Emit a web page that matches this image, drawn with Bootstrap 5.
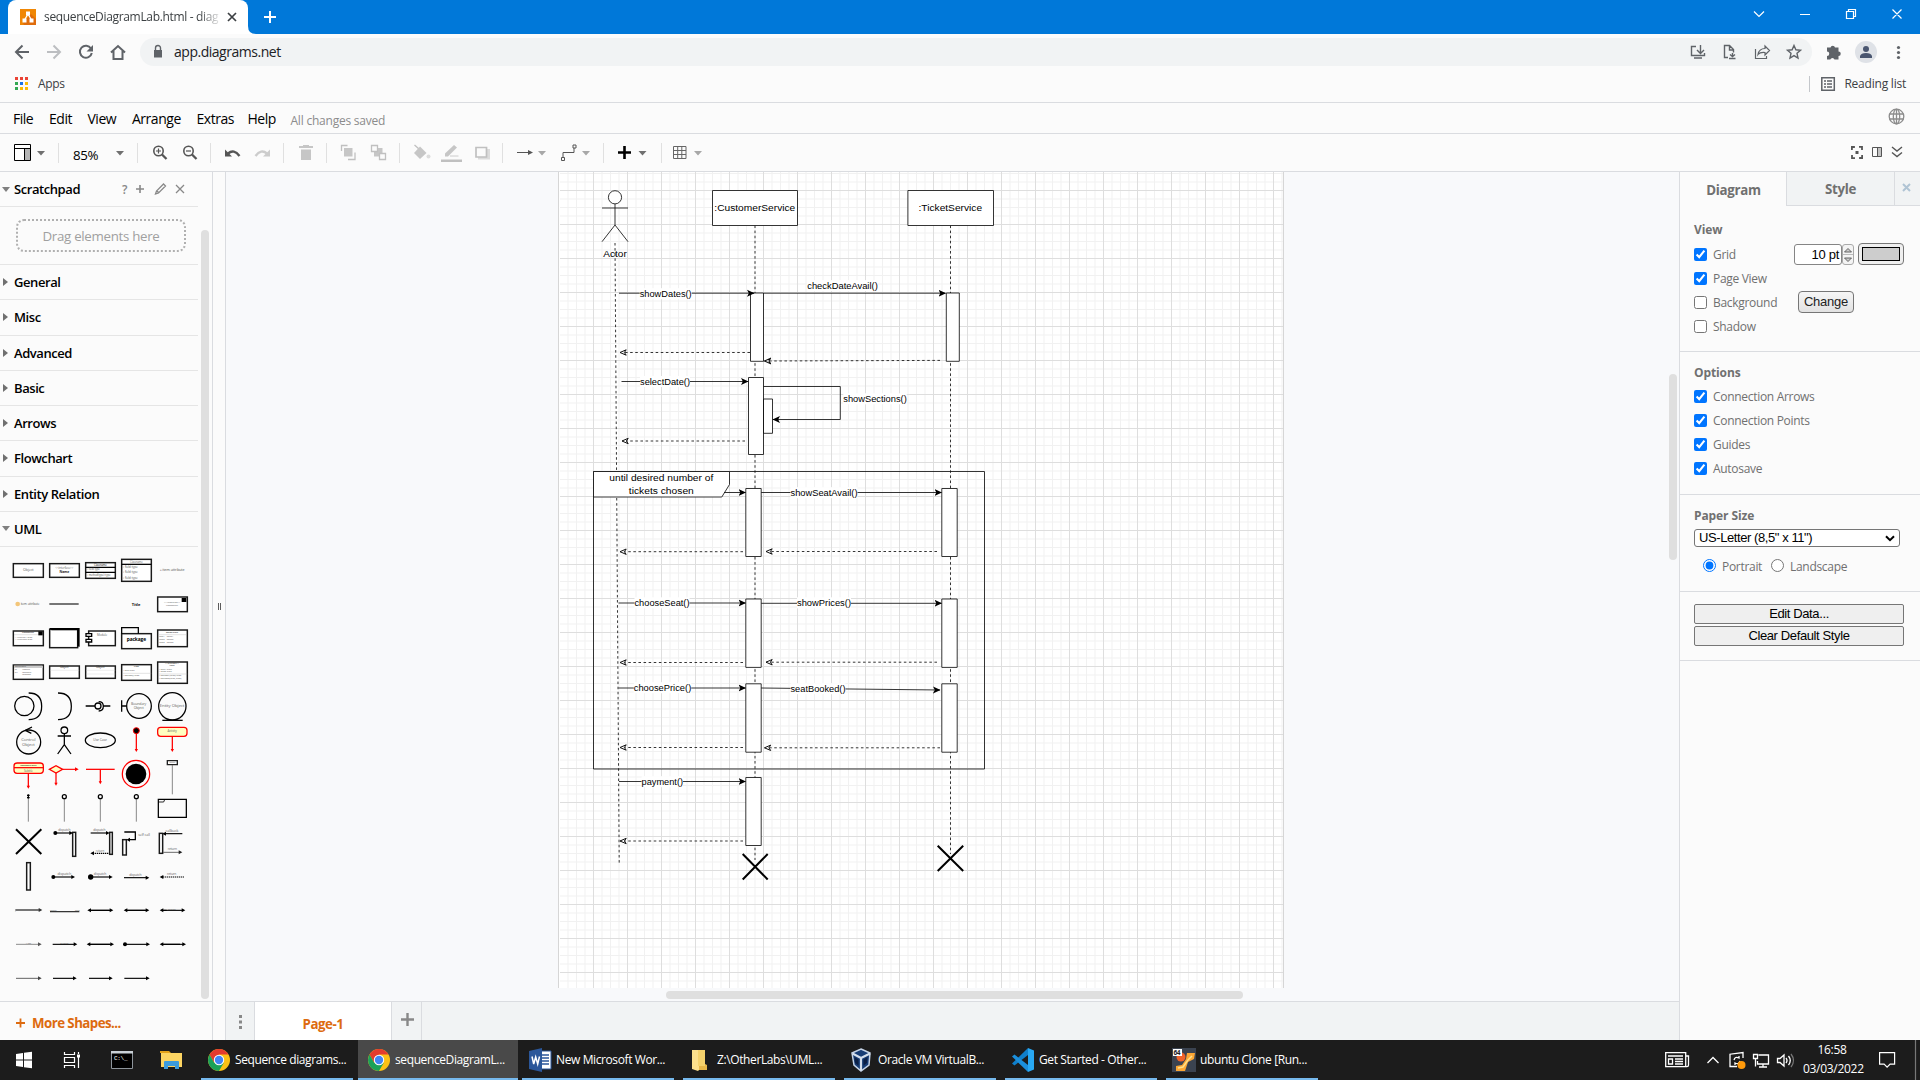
<!DOCTYPE html>
<html lang="en">
<head>
<meta charset="utf-8">
<title>sequenceDiagramLab.html - diagrams.net</title>
<link href="https://cdn.jsdelivr.net/npm/bootstrap@5.3.0/dist/css/bootstrap.min.css" rel="stylesheet">
<script src="https://cdn.jsdelivr.net/npm/bootstrap@5.3.0/dist/js/bootstrap.bundle.min.js"></script>
<style>
:root{--line:#dadce0;--ui:"Open Sans","Noto Sans",sans-serif}
html,body{height:1080px;overflow:hidden}
body{width:1920px;font:12px/16px var(--ui);letter-spacing:-.3px;color:#000;background:#fbfbfb}
svg{display:block;flex:none}
.tabstrip{height:34px;background:#0078d9}
.btab{width:240px;margin-left:8px;padding-left:12px;background:#fff;border-radius:8px 8px 0 0}
.btab .ttl{width:176px;margin-left:8px;color:#3c4043;white-space:nowrap;letter-spacing:-.33px;-webkit-mask-image:linear-gradient(90deg,#000 155px,transparent 178px)}
.navrow{height:36px}
.omni{width:1672px;height:28px;border-radius:14px;background:#f1f3f4;margin-top:4px}
.omni .url{font-size:14px;color:#202124;letter-spacing:-.48px}
.bookmarks{height:33px;border-bottom:1px solid var(--line)}
.bookmarks span{margin-top:-4px}
.menubar{height:31px;border-bottom:1px solid var(--line);padding-left:13px}
.menubar .mi{font-size:14px;letter-spacing:-.48px;padding-top:2px}
.toolbar{height:38px;border-bottom:1px solid var(--line)}
.main{height:868px}
.side{width:213px;border-right:1px solid var(--line)}
.side-scroll{height:829px}
.sect{height:35.25px;width:198px;border-bottom:1px solid #e5e5e5;font-weight:600;font-size:13px;letter-spacing:-.43px;white-space:nowrap}
.sect i{border:4px solid transparent;border-left:5px solid #707070;border-right:0;width:5px;height:8px;margin-left:3px;margin-right:6px}
.sect i.open{border:4px solid transparent;border-top:5px solid #808080;border-bottom:0;width:8px;height:5px;margin-left:2px;margin-right:4px}
.dropzone{width:170px;height:33px;margin:12px 0 12px 16px;border:2px dotted #b0b0b0;border-radius:8px;color:#a0a0a0;font-size:13.3px;letter-spacing:-.3px}
.palette{width:190px;padding:6px 0 0 10px}
.palette svg{width:36px;height:34px;overflow:visible}
.thumb{background:#dfdfdf;border-radius:4px}
.more{height:39px;border-top:1px solid var(--line);padding:4px 0 0 16px;color:#dd6b10;font-weight:700;font-size:13.3px;letter-spacing:-.55px}
.split{width:13px;border-right:1px solid var(--line)}
.work{width:1453px}
.canvas{height:829px;background:#f8f9fb;padding-left:332px}
.pages{height:39px;border-top:1px solid var(--line);background:#f1f3f4}
.pg{width:138px;background:#fff;border-right:1px solid var(--line);border-left:1px solid var(--line);color:#dd6b10;font-weight:700;font-size:13.3px;letter-spacing:-.45px;padding-top:5px}
.fmt{width:241px;border-left:1px solid var(--line);color:#707070;font-size:12px}
.ftab{height:34px;background:#f1f3f4;border-bottom:1px solid var(--line);border-left:1px solid var(--line);font-weight:700;font-size:13.3px;letter-spacing:-.33px}
.ftab.on{background:none;border-color:transparent}
.fsec{border-bottom:1px solid var(--line);padding:0 20px 0 14px}
.fsec b{display:block;letter-spacing:-.1px;line-height:16px}
.frow{height:24px}
.frow input,.radios input{appearance:auto;width:13px;height:13px;margin:0 6px 0 0}
.frow span{padding-top:1px}
.num{width:48px;height:21px;border:1px solid #858585;border-radius:3px;background:#fff;color:#000;text-align:right;font:13px/19px "Liberation Sans",sans-serif;padding-right:2px}
.step{width:12px;height:21px;border:1px solid #aaa;border-radius:3px;background:#f4f4f4}
.swatch{width:46px;height:22px;border:1.5px solid #777;border-radius:4px;background:#efefef;padding:2.5px 3px}
.swatch div{height:14px;border:1px solid #000;background:#cdcdcd}
.gbtn{border:1px solid #767676;border-radius:4px;background:linear-gradient(#f6f6f6,#e2e2e2);color:#222;font:13px/19px "Liberation Sans",sans-serif;letter-spacing:-.25px;width:56px;height:22px;text-align:center}
.fbtn{border:1px solid #767676;border-radius:2px;background:#efefef;color:#000;font:13px/17px "Liberation Sans",sans-serif;letter-spacing:-.38px;width:210px;height:20px;text-align:center;margin-bottom:2px}
.paper{width:206px;height:18px;border:1px solid #767676;border-radius:3px;background:#fff;color:#000;font:13px/16px "Liberation Sans",sans-serif;letter-spacing:-.42px;padding:0 4px}
.task{height:40px;background:#1c1c1c;color:#fff}
.tbtn{width:152px;height:40px;margin-right:9px;border-bottom:2px solid #76b9ed;padding:2px 0 0 6px;white-space:nowrap;letter-spacing:-.39px}
.tbtn svg{margin-right:4px}
.tbtn.on{width:160px;margin:0 4px 0 -4px;padding-left:9px;background:#494949}
.dia text{font-family:"Liberation Sans",Arial,sans-serif;text-anchor:middle;letter-spacing:0}
</style>
</head>
<body>
<header class="tabstrip d-flex">
  <div class="btab d-flex align-items-center">
    <svg width="16" height="16" viewBox="0 0 16 16"><path fill="#f08705" d="M0 0h16v16H0z"/><path fill="#df6c0c" d="M11 5l5 5v6H4l-1-2z"/><path d="M8 5L4.500 11M8 5l3.500 6" stroke="#fff" stroke-width="1.300"/><path fill="#fff" d="M6 2.500h4v4H6zM2.500 9.500h4v4h-4zM9.500 9.500h4v4h-4z"/></svg>
    <div class="ttl">sequenceDiagramLab.html - diag</div>
    <svg width="10" height="10" viewBox="0 0 10 10" style="margin-left:7px"><path d="M1 1l8 8M9 1L1 9" stroke="#3c4043" stroke-width="1.700"/></svg>
  </div>
  <svg width="1672" height="34" viewBox="248 0 1672 34" fill="none" stroke="#fff"><path d="M248 26v8h8q-8 0-8-8z" fill="#fff" stroke="none"/><path d="M264 17h12M270 11v12" stroke-width="2"/><path d="M1754 11.500l5 5 5-5" stroke-width="1.200"/><path d="M1800 14.500h10M1846.500 11.500h7v7h-7zM1848.500 11.500v-2h7v7h-2M1892.500 9.500l9 9M1901.500 9.500l-9 9" stroke-width="1.200"/></svg>
</header>
<div class="navrow d-flex">
  <svg width="140" height="36" viewBox="0 34 140 36" fill="none" stroke="#5f6368" stroke-width="2"><path d="M29 52H16M22.500 45.500L16 52l6.500 6.500"/><path d="M47 52h13M53.500 45.500L60 52l-6.500 6.500" stroke="#bcbec1"/><path d="M91 48.500A6 6 0 1 0 91.800 53"/><path d="M93 45v6.500h-6.500z" fill="#5f6368" stroke="none"/><path d="M111 52.500l7-6.500 7 6.500M113.500 51v8h9v-8"/></svg>
  <div class="omni d-flex align-items-center justify-content-between">
    <div class="d-flex align-items-center">
      <svg width="34" height="28" viewBox="140 38 34 28"><path fill="#5f6368" d="M154 50h8v7.500h-8z"/><path d="M155.500 50v-2a2.500 2.500 0 0 1 5 0v2" fill="none" stroke="#5f6368" stroke-width="1.400"/></svg>
      <span class="url">app.diagrams.net</span>
    </div>
    <svg width="122" height="28" viewBox="1690 38 122 28" fill="none" stroke="#5f6368" stroke-width="1.400"><path d="M1696 46.500h-4.500v9h13V53M1694 58h8M1700.500 45v8M1697 50l3.500 3.500 3.500-3.500"/><path d="M1728 57.500h-3.500v-12h5l4 4v3M1729.500 46v4h4M1732.500 53v3.500M1730 54.500l2.500 2 2.500-2M1729 58.500h6.500"/><path d="M1755.500 49v9.500h11V56M1758 54.500q1-6 7-6v-2.500l4.500 4.500-4.500 4.500v-2.500q-5-.500-7 2z" stroke-width="1.200"/><path d="M1794 45.500l1.900 4.300 4.600.500-3.500 3 1 4.700-4-2.400-4 2.400 1-4.700-3.500-3 4.600-.500z"/></svg>
  </div>
  <svg width="108" height="36" viewBox="1812 34 108 36" fill="#5f6368"><path d="M1827 47.500h3.500a2.300 2.300 0 0 1 4.500 0h3.500v4a2.200 2.200 0 0 1 0 4.500v3.500h-4a2.200 2.200 0 0 0-4.200 0H1827v-3.500a2.200 2.200 0 0 0 0-4.500z"/><circle cx="1866" cy="52" r="11" fill="#dfe2e7"/><circle cx="1866" cy="49" r="3" fill="#4a5670"/><path d="M1860 58v-2q1-3 6-3t6 3v2z" fill="#4a5670"/><circle cx="1898.500" cy="47.500" r="1.600"/><circle cx="1898.500" cy="52.500" r="1.600"/><circle cx="1898.500" cy="57.500" r="1.600"/></svg>
</div>
<div class="bookmarks d-flex align-items-center justify-content-between" style="color:#3c4043">
  <div class="d-flex align-items-center">
    <svg width="38" height="32" viewBox="0 70 38 32"><path fill="#ea4335" d="M15 77h3v3h-3zM20 77h3v3h-3zM25 77h3v3h-3z"/><path fill="#34a853" d="M15 82h3v3h-3zM15 87h3v3h-3z"/><path fill="#1a73e8" d="M20 82h3v3h-3z"/><path fill="#fbbc04" d="M25 82h3v3h-3zM20 87h3v3h-3zM25 87h3v3h-3z"/></svg><span>Apps</span>
  </div>
  <div class="d-flex align-items-center" style="padding-right:14px">
    <svg width="35" height="32" viewBox="1809 70 35 32" fill="none" stroke="#5f6368" stroke-width="1.500"><path d="M1809.500 76v16" stroke="#c4c7cb" stroke-width="1"/><path d="M1821.800 77.800h12.500v12.500h-12.500zM1824 81h2M1824 84h2M1824 87h2M1827 81h5M1827 84h5M1827 87h5"/></svg><span style="letter-spacing:-.22px">Reading list</span>
  </div>
</div>
<div class="menubar d-flex align-items-center justify-content-between">
  <nav class="d-flex align-items-center">
    <span class="mi" style="width:36px">File</span><span class="mi" style="width:38.500px">Edit</span><span class="mi" style="width:44.500px">View</span><span class="mi" style="width:64.500px">Arrange</span><span class="mi" style="width:51px">Extras</span><span class="mi" style="width:43px">Help</span><span style="color:#8c8c8c;padding-top:5px;letter-spacing:-.22px">All changes saved</span>
  </nav>
  <svg width="32" height="30" viewBox="1888 103 32 30" fill="none" stroke="#8c8c8c" stroke-width="1.300"><circle cx="1896.500" cy="116.500" r="7.300"/><ellipse cx="1896.500" cy="116.500" rx="3.200" ry="7.300"/><path d="M1889.500 114h14M1889.500 119h14M1896.500 109v15"/></svg>
</div>
<div class="toolbar d-flex">
  <svg width="73" height="37" viewBox="0 134 73 37"><path d="M14.500 144.500h16v16h-16z" fill="#fff" stroke="#000"/><path d="M25 149h5v11h-5z" fill="#b5b5b5"/><path d="M14 148.500h17M24.500 148.500v12" stroke="#000"/><path d="M37 151h8l-4 4.500z" fill="#707070"/><path d="M58.500 143v20" stroke="#e0e0e0"/></svg>
  <span style="width:42px;font-size:13.300px;line-height:16px;padding-top:13px;letter-spacing:-.3px">85%</span>
  <svg width="1389" height="37" viewBox="115 134 1389 37" fill="none">
    <path d="M137.500 143v20M210.500 143v20M283.500 143v20M326.500 143v20M399.500 143v20M502.500 143v20M603.500 143v20M661.500 143v20" stroke="#e0e0e0"/>
    <path d="M116 151h8l-4 4.500zM638.500 151h8l-4 4.500z" fill="#707070"/><path d="M538 151h8l-4 4.500zM582 151h8l-4 4.500zM694 151h8l-4 4.500z" fill="#a8a8a8"/>
    <g stroke="#555" stroke-width="1.600"><circle cx="158.500" cy="151" r="4.700"/><path d="M162 154.500l4.500 4.500" stroke-width="2.300"/><path d="M156 151h5M158.500 148.500v5" stroke-width="1.200"/><circle cx="188.500" cy="151" r="4.700"/><path d="M192 154.500l4.500 4.500" stroke-width="2.300"/><path d="M186 151h5" stroke-width="1.200"/></g>
    <path d="M228 153.500q6-5 11.500 2.500" stroke="#555" stroke-width="2.300"/><path d="M225 149.500v7h7z" fill="#555"/>
    <path d="M267 153.500q-6-5-11.500 2.500" stroke="#ccc" stroke-width="2.300"/><path d="M270 149.500v7h-7z" fill="#ccc"/>
    <g fill="#c6c6c6"><path d="M299 146h14v2h-14zM303 145h6v1h-6zM301 149.500h10V160h-10z"/><path d="M344 148h8.500v8.500H344z"/><path d="M374 148h8.500v8.500H374z"/></g>
    <g stroke="#c0c0c0" stroke-width="1.300"><path d="M341.500 151v-5.500h6M348 159.500h7v-7"/><path d="M371.500 145.500h6v6h-6zM379.500 153.500h6v6h-6z" fill="#fbfbfb"/><path d="M414.500 145l9 8"/></g>
    <path d="M420 146.500l6.500 6.500-6.500 6-6-6z" fill="#c6c6c6"/><circle cx="428.500" cy="156.500" r="2" fill="#dcdcdc"/>
    <path d="M445 156.500v-3l9-8.500 3 2.500-9 9z" fill="#c6c6c6"/><path d="M450 156h8.500" stroke="#ccc"/><path d="M441 159.500h21v2.500h-21z" fill="#c0c0c0"/>
    <path d="M478 149h12v10.500h-12z" fill="#dcdcdc"/><path d="M476 147.500h10.500V157H476z" fill="#fbfbfb" stroke="#c0c0c0" stroke-width="1.700"/>
    <path d="M517 152.500h14" stroke="#555"/><path d="M533 152.500l-5-2.500v5z" fill="#555"/>
    <path d="M563 158v-5.500h11V147" stroke="#555"/><path d="M561.500 157.500h3v3h-3zM573 145h3v3h-3z" stroke="#555" fill="#fbfbfb"/>
    <path d="M618 152.500h13M624.500 146v13" stroke="#000" stroke-width="2.600"/>
    <path d="M673.500 146.500h12.500v12h-12.500zM677.700 146v13M681.800 146v13M673 150.500h13M673 154.500h13" stroke="#666"/>
  </svg>
  <svg class="ms-auto" width="80" height="37" viewBox="1840 134 80 37" fill="none" stroke="#555" stroke-width="1.800"><path d="M1851.900 150v-3h3M1859 146.900h3v3M1862.100 155v3h-3M1855 158.100h-3v-3"/><path d="M1855.500 150.500h3v3h-3z" fill="#555" stroke="none" transform="translate(0 .500)"/><path d="M1878 147h3.500v10h-3.500z" fill="#c4c4c4" stroke="none"/><path d="M1872.500 147.500h9v9h-9zM1877.500 147v10" stroke-width="1"/><path d="M1892 147l5 4 5-4M1892 152.500l5 4 5-4" stroke-width="1.400"/></svg>
</div>
<div class="main d-flex">
  <aside class="side">
    <div class="side-scroll d-flex">
      <div style="width:201px">
        <div class="sect d-flex align-items-center" style="height:35px"><i class="open"></i><span style="width:107px">Scratchpad</span>
          <svg width="66" height="20" viewBox="121 179 66 20" fill="none" stroke="#888" stroke-width="1.300"><text x="122" y="194" font-size="12" fill="#888" stroke="none">?</text><path d="M136 189h8M140 185v8" stroke-width="1.600"/><path d="M155.500 194l1-3 7-7 2 2-7 7zM157 191l2 2"/><path d="M176 185l8 8M184 185l-8 8"/></svg></div>
        <div class="dropzone d-flex align-items-center justify-content-center">Drag elements here</div>
        <div style="width:198px;border-top:1px solid #e5e5e5"></div>
        <div class="sect d-flex align-items-center"><i></i>General</div>
        <div class="sect d-flex align-items-center"><i></i>Misc</div>
        <div class="sect d-flex align-items-center"><i></i>Advanced</div>
        <div class="sect d-flex align-items-center"><i></i>Basic</div>
        <div class="sect d-flex align-items-center"><i></i>Arrows</div>
        <div class="sect d-flex align-items-center"><i></i>Flowchart</div>
        <div class="sect d-flex align-items-center"><i></i>Entity Relation</div>
        <div class="sect d-flex align-items-center"><i class="open"></i>UML</div>
        <div class="palette d-flex flex-wrap" id="palette"></div>
      </div>
      <div class="thumb" style="width:8px;height:769px;margin-top:58px"></div>
    </div>
    <div class="more d-flex align-items-center"><svg width="16" height="12" viewBox="0 0 16 12"><path d="M0 6h9M4.500 1.500v9" stroke="#dd6b10" stroke-width="1.800"/></svg>More Shapes...</div>
  </aside>
  <div class="split d-flex align-items-center justify-content-center"><svg width="5" height="7" viewBox="0 0 5 7"><path d="M1.500 0v7M3.500 0v7" stroke="#333" stroke-width=".8"/></svg></div>
  <main class="work">
    <div class="canvas">
      <div class="d-flex">
      <svg class="dia" width="726" height="816" viewBox="558 172 726 816" fill="none" stroke="#111" stroke-width=".85">
        <defs>
          <pattern id="grid" x="559" y="190" width="34" height="34" patternUnits="userSpaceOnUse"><path d="M9 0v34M17.500 0v34M26 0v34M0 9h34M0 17.500h34M0 26h34" stroke="#f1f1f1" stroke-width="1"/><path d="M.5 0v34M0 .5h34" stroke="#dedede" stroke-width="1"/></pattern>
          <marker id="full" markerUnits="userSpaceOnUse" markerWidth="9" markerHeight="9" refX="7" refY="4" orient="auto"><path d="M0 .5L7.500 4 0 7.500 1.800 4z" fill="#000" stroke="none"/></marker>
          <marker id="open" markerUnits="userSpaceOnUse" markerWidth="9" markerHeight="9" refX="7" refY="4" orient="auto"><path d="M.8 1.300L7 4 .8 6.700 2.600 4z" fill="#fff" stroke="#111" stroke-width="1"/></marker>
        </defs>
        <path d="M558 172h726v816H558z" fill="#fff" stroke="none"/>
        <path d="M560 172h723v816H560z" fill="url(#grid)" stroke="none"/>
        <path d="M558.500 172v816M1283.500 172v816" stroke="#d6d6d6" stroke-width="1"/>
        <g id="lifelines" stroke-dasharray="2.550 2.550"><path d="M615 243L619.200 863"/><path d="M755 225.500V860"/><path d="M950.500 225.500V854"/></g>
        <circle cx="615" cy="197.300" r="6.600" fill="#fff"/><path d="M615 204v21M602 208h26M615 225l-13 16.700M615 225l13 16.700"/>
        <g fill="#fff"><path d="M712.500 190.500h85v35h-85zM907.900 190.500h85.600v35h-85.600z"/>
          <path d="M750.500 293h13v68.300h-13zM946.300 293h13v68.300h-13zM748.500 377.500h15v77h-15zM763.500 399h9v34.300h-9z"/></g>
        <path d="M593.500 471.500h391V769h-391z"/>
        <g fill="#fff"><path d="M745.800 488.500h15.400v68h-15.400zM941.800 488.500h15.400v68h-15.400zM745.800 599h15.400v68.400h-15.400zM941.800 599h15.400v68.400h-15.400zM745.800 683.800h15.400v68.400h-15.400zM941.800 683.800h15.400v68.400h-15.400zM745.800 777.500h15.400v68h-15.400z"/>
          <path d="M593.500 471.500h136v13l-7.700 12.500H593.500z"/></g>
        <g marker-end="url(#full)"><path d="M619 293.200H754"/><path d="M763.500 293.200H945.500"/><path d="M621.500 381.500H748"/><path d="M763.500 386.500h76.800v33H773"/><path d="M724 492.500H745.500"/><path d="M761.200 492.500H941.500"/><path d="M618.500 603H745.500"/><path d="M761.200 603.300H941.500"/><path d="M618.500 688H745.500"/><path d="M761.200 688L940 690"/><path d="M619 781.500H745.500"/></g>
        <g marker-end="url(#open)" stroke-dasharray="2.550 2.550"><path d="M750 352.500H620"/><path d="M940 360.400L764.500 361"/><path d="M745 441H622"/><path d="M743 551.700H620"/><path d="M937 551.500H766"/><path d="M743 662.500H620"/><path d="M937 662.200H766"/><path d="M743 747.500H620"/><path d="M940 747.800H764.500"/><path d="M743 841H620"/></g>
        <path d="M742.700 854l25 25.500M767.700 854l-25 25.500M937.700 845.700l25.500 25.300M963.200 845.700L937.700 871" stroke="#000" stroke-width="2"/>
        <g id="labels"></g>
      </svg>
      <div class="thumb" style="width:8px;height:186px;margin:202px 0 0 385px"></div>
      </div>
      <div class="thumb" style="width:577px;height:8px;margin:3px 0 0 108px"></div>
    </div>
    <div class="pages d-flex">
      <svg width="28" height="38" viewBox="226 1002 28 38"><path d="M239 1015h3v3h-3zM239 1020.500h3v3h-3zM239 1026h3v3h-3z" fill="#888"/></svg>
      <div class="pg d-flex align-items-center justify-content-center">Page-1</div>
      <svg width="30" height="38" viewBox="392 1002 30 38"><path d="M401 1019.500h13M407.500 1013v13" stroke="#888" stroke-width="2.400"/><path d="M421.500 1002v38" stroke="#dadce0"/></svg>
    </div>
  </main>
  <aside class="fmt">
    <div class="d-flex">
      <div class="ftab on d-flex align-items-center justify-content-center" style="width:106px;padding-top:3px">Diagram</div>
      <div class="ftab d-flex align-items-center justify-content-center" style="width:108px">Style</div>
      <div class="ftab d-flex align-items-center justify-content-center" style="width:26px;padding:0 2px 3px 0"><svg width="9" height="9" viewBox="0 0 9 9"><path d="M1 1l7 7M8 1L1 8" stroke="#b0c4d4" stroke-width="2"/></svg></div>
    </div>
    <div class="fsec" style="height:146px;padding-top:16px">
      <b>View</b>
      <div class="frow d-flex align-items-center" style="margin-top:4px;margin-right:-4px"><input type="checkbox" checked><span style="width:81px;flex:none">Grid</span><div class="num flex-shrink-0">10 pt</div><div class="step flex-shrink-0"><svg width="10" height="19" viewBox="0 0 10 19"><path d="M1.500 7L5 3.500 8.500 7zM1.500 13L5 16.500 8.500 13z" fill="#ccc" stroke="#555" stroke-width=".900"/><path d="M0 9.500h10" stroke="#bbb"/></svg></div><div class="swatch flex-shrink-0" style="margin-left:4px"><div></div></div></div>
      <div class="frow d-flex align-items-center"><input type="checkbox" checked><span>Page View</span></div>
      <div class="frow d-flex align-items-center"><input type="checkbox"><span style="width:85px">Background</span><div class="gbtn">Change</div></div>
      <div class="frow d-flex align-items-center"><input type="checkbox"><span>Shadow</span></div>
    </div>
    <div class="fsec" style="height:143px;padding-top:13px">
      <b>Options</b>
      <div class="frow d-flex align-items-center" style="margin-top:3px"><input type="checkbox" checked><span>Connection Arrows</span></div>
      <div class="frow d-flex align-items-center"><input type="checkbox" checked><span>Connection Points</span></div>
      <div class="frow d-flex align-items-center"><input type="checkbox" checked><span>Guides</span></div>
      <div class="frow d-flex align-items-center"><input type="checkbox" checked><span>Autosave</span></div>
    </div>
    <div class="fsec" style="height:97px;padding-top:13px">
      <b>Paper Size</b>
      <div class="paper d-flex align-items-center justify-content-between" style="margin-top:5px"><span>US-Letter (8,5" x 11")</span><svg width="10" height="7" viewBox="0 0 10 7"><path d="M1 1.200l4 4 4-4" fill="none" stroke="#000" stroke-width="2"/></svg></div>
      <div class="radios d-flex align-items-center" style="margin:9px 0 0 9px"><input type="radio" checked><span style="width:49px;padding-top:3px">Portrait</span><input type="radio"><span style="padding-top:3px">Landscape</span></div>
    </div>
    <div class="fsec" style="height:69px;padding-top:12px"><div class="fbtn">Edit Data...</div><div class="fbtn">Clear Default Style</div></div>
  </aside>
</div>
<footer class="task d-flex">
  <svg width="201" height="40" viewBox="0 1040 201 40" fill="none" stroke="#fff">
    <path d="M16 1054l7-1v6.500h-7zM24 1052.800l8-1.100v7.800h-8zM16 1060.500h7v6.500l-7-1zM24 1060.500h8v7.800l-8-1.100z" fill="#fff" stroke="none"/>
    <path d="M64.500 1052v2.500h10V1052M64.500 1068v-2.500h10v2.500M64.500 1057.500h10v5h-10zM78.500 1052v2M78.500 1057v11" stroke-width="1.200"/><path d="M77 1054.500h3v3h-3z" fill="#fff" stroke="none"/>
    <path d="M111 1051h22v18h-22z" fill="#000" stroke="none"/><path d="M111.500 1051.500h21v17h-21z" stroke="#8d949b"/><path d="M111 1051h22v2.500h-22z" fill="#c9d0d6" stroke="none"/><text x="114" y="1060" font-size="6" fill="#fff" stroke="none" style="font-family:'Liberation Mono',monospace">C:\_</text>
    <g stroke="none"><path d="M160 1051h9l2 2h-11z" fill="#e3a21a"/><path d="M161 1053h21v14h-21z" fill="#fcd462"/><path d="M164 1069v-7q0-1 1-1h13q1 0 1 1v7h-4v-3h-7v3z" fill="#3c9bdc"/></g>
  </svg>
  <div class="tbtn d-flex align-items-center"><svg width="24" height="24" viewBox="-12 -12 24 24"><g id="chrome"><circle r="11" fill="#fbc116"/><path d="M-9.500-5.500A11 11 0 0 1 9.500-5.500H0L-4.800 2.800z" fill="#e33b2e"/><path d="M-9.500-5.500A11 11 0 0 0 0 11L4.800 2.800H-4.800z" fill="#1aa15a"/><circle r="5.200" fill="#fff"/><circle r="4.200" fill="#4285f4"/></g></svg>Sequence diagrams...</div>
  <div class="tbtn on d-flex align-items-center"><svg width="24" height="24" viewBox="-12 -12 24 24"><use href="#chrome"/></svg>sequenceDiagramL...</div>
  <div class="tbtn d-flex align-items-center"><svg width="24" height="24" viewBox="0 0 24 24"><path d="M12 3h11v18H12z" fill="#fff" stroke="#2b579a"/><path d="M14 7h7M14 10h7M14 13h7M14 16h7" stroke="#2b579a" stroke-width="1.300"/><path d="M1 3l13-3v24L1 21z" fill="#2b579a"/><path d="M4 8.500L5.700 16l2-7 2 7 1.800-7.500" fill="none" stroke="#fff" stroke-width="1.500"/></svg>New Microsoft Wor...</div>
  <div class="tbtn d-flex align-items-center"><svg width="24" height="24" viewBox="0 0 24 24"><path d="M9 2h7v14l2 1v5H9z" fill="#e8b848"/><path d="M3 2h7v20l-1 1-6-2z" fill="#fce08c"/><path d="M9 2h7v16H9z" fill="#f5d26c"/></svg>Z:\OtherLabs\UML...</div>
  <div class="tbtn d-flex align-items-center"><svg width="24" height="24" viewBox="0 0 24 24"><path d="M11 1l9 4-1 12-8 6-7-6L2 5z" fill="#173c74" stroke="#c5d3e6" stroke-width="1.500"/><path d="M2.500 5.500L11 10l9-4.500M11 10v12.500" stroke="#d4deeb" stroke-width="2.200" fill="none"/><path d="M4.500 9l4 2.500v6L5 15zM17.500 9l-4 2.500v6L17 15z" fill="#0b1f45"/></svg>Oracle VM VirtualB...</div>
  <div class="tbtn d-flex align-items-center"><svg width="24" height="24" viewBox="0 0 24 24"><path d="M17 0l6 2.500v19L17 24z" fill="#29a8f3"/><path d="M1 15.500L17 0v7L3.500 17.500z" fill="#0f7fcb"/><path d="M1 8.500L17 24v-7L3.500 6.500z" fill="#1b8fdc"/></svg>Get Started - Other...</div>
  <div class="tbtn d-flex align-items-center"><svg width="24" height="24" viewBox="0 0 24 24"><path d="M0 0h24v24H0z" fill="#3b4350"/><circle cx="9" cy="9" r="4.500" fill="#f0632a"/><path d="M4 23v-5l6-1 4-6 1-6h8l-1 6-6 3-3 9z" fill="#fba735"/><path d="M6 20l5-1 5-7 4-4" stroke="#ffe08a" stroke-width="1.500" fill="none"/><path d="M1 1h9v7H1z" fill="#fff"/><text x="1.500" y="7" font-size="6.500" font-weight="700" fill="#222">64</text></svg>ubuntu Clone [Run...</div>
  <svg style="margin-left:328px" width="148" height="40" viewBox="1655 1040 148 40" fill="none" stroke="#fff" stroke-width="1.300">
    <path d="M1665.700 1052.700h20v14h-20zM1686 1056h2.500v9q0 1.700-1.500 1.700h-3M1668 1056h15M1675 1059h8M1675 1061.500h8M1675 1064h8M1668.500 1059h4v5h-4z"/>
    <path d="M1707.500 1063l5.500-5.500 5.500 5.500"/><path d="M1743 1058v-5.500l-13 1.700v12.300h7M1734 1060q1-4 5-2v-2M1740 1061q-1 4-5 2v2"/><circle cx="1741.500" cy="1065" r="4" fill="#ff9a0a" stroke="none"/>
    <path d="M1758.500 1055h10v9h-11v-3M1763 1064v3M1759 1067h8M1753.500 1054.500h4v4h-4zM1755.500 1058.500v8"/>
    <path d="M1777.500 1058.500h2.500l4-3.500v11l-4-3.500h-2.500zM1786 1058q2 2.500 0 5M1788.500 1056q3.500 4.500 0 9"/><path d="M1791 1054q5 6.500 0 13" stroke="#777"/>
  </svg>
  <div class="text-center" style="width:58px;margin-top:1px;line-height:18.500px;white-space:nowrap"><div>16:58</div><div>03/03/2022</div></div>
  <svg width="59" height="40" viewBox="1861 1040 59 40" fill="none" stroke="#fff" stroke-width="1.200"><path d="M1879.600 1052.600h15v11.500h-4.500l-3 3-3-3h-4.500z"/><path d="M1915.500 1040v40" stroke="#777"/></svg>
</footer>
<script>
// Message and participant labels: text, centre x, middle y, width, font size, opaque background
const labels=[["Actor",615,253.9,23.5,9.7,0],[":CustomerService",754.8,207.7,81,9.7,0],[":TicketService",950.3,207.7,63.500,9.7,0],
["showDates()",665.7,293.7,52,9.35,1],["checkDateAvail()",842.5,285.7,70.500,9.35,1],["selectDate()",665,381.5,50,9.35,1],["showSections()",875,398.8,63.500,9.35,1],
["until desired number of",661.3,478.1,104,9.7,0],["tickets chosen",661.3,490.900,65,9.7,0],["showSeatAvail()",824,492.700,67,9.35,1],
["chooseSeat()",662,602.800,55,9.35,1],["showPrices()",824,602.800,54,9.35,1],["choosePrice()",662.5,687.700,57.500,9.35,1],["seatBooked()",818,688.700,55,9.35,1],["payment()",662.3,781.700,41.500,9.35,1]];
document.getElementById("labels").innerHTML=labels.map(([t,x,y,w,s,b])=>(b?`<rect x="${x-w/2}" y="${y-5.5}" width="${w}" height="11" fill="#fff" stroke="none"/>`:"")+`<text x="${x}" y="${y+s*.35}" font-size="${s}" textLength="${w}" lengthAdjust="spacingAndGlyphs" fill="#000" stroke="none">${t}</text>`).join("");

// UML palette thumbnails, three drawing units per pixel
const K='stroke="#000" stroke-width="3.8" fill="none"', R='stroke="#f00" stroke-width="3.8" fill="none"';
const box=(x,y,w,h,f="#fff")=>`<rect x="${x}" y="${y}" width="${w}" height="${h}" stroke="#1a1a1a" stroke-width="4.4" fill="${f}"/>`;
const p=(d,a=K)=>`<path d="${d}" ${a}/>`;
const t=(x,y,s,v,c="#666",o="")=>`<text x="${x}" y="${y}" font-size="${s}" text-anchor="middle" fill="${c}" ${o}>${v}</text>`;
const l=(x,y,s,v)=>`<text x="${x}" y="${y}" font-size="${s}" fill="#555">${v}</text>`;
const ar=(x1,x2,y,c="#000",w=3.4)=>p(`M${x1} ${y}H${x2-6}`,`stroke="${c}" stroke-width="${w}" fill="none"`)+`<path d="M${x2} ${y}l-11-6v12z" fill="${c}"/>`;
const al=(x1,x2,y,d="")=>p(`M${x2} ${y}H${x1+6}`,`stroke="#000" stroke-width="3.4" fill="none" ${d}`)+`<path d="M${x1} ${y}l11-6v12z"/>`;
const dn=(x,y1,y2)=>p(`M${x} ${y1}V${y2-6}`,R)+`<path d="M${x} ${y2}l-5-9h10z" fill="#f00"/>`;
const life=(x,y)=>p(`M${x} ${y}V${y+68}`,'stroke="#777" stroke-width="2.6"');
const cells=[
 [box(40,71,90,41)+t(85,93,11,"Object"),
  box(149,71,89,41)+t(193,87,9,"&lt;&lt;interface&gt;&gt;")+t(193,99,10,"Name","#222",'font-weight="700"'),
  box(257,68,89,47)+p("M257 82H346M257 97H346")+t(301,78,8,"Classname","#000")+l(260,91,8,"+ field: type")+l(260,109,8,"+ method(type): type"),
  box(365,58,89,66)+p("M365 73H454")+t(409,69,8,"Classname")+l(368,83,9,"+ field: type")+l(368,98,9,"+ field: type")+l(368,116,9,"+ field: type"),
  l(479,93,10.5,"+ item: attribute")],
 [`<circle cx="53" cy="192" r="7" fill="#f3c67a"/>`+l(62,194,9,"item: attribute"),p("M148 192H236",'stroke="#333" stroke-width="4"'),"",t(408,197,12,"Title","#111",'font-weight="700"'),
  box(473,171,89,44)+t(516,189,7,"&lt;&lt;Annotation&gt;&gt;")+t(516,199,7,"Component")+`<path d="M545 174h14v12h-14z"/>`],
 [box(40,273,90,44)+t(84,278,7,"Component","#000")+p("M42 284H128",'stroke="#aaa"')+l(44,294,7,"+ Attribute1: Type")+l(44,301,7,"+ Attribute2: Type")+`<path d="M115 274h13v12h-13z"/>`,
  box(149,268,84,55)+p("M149 266h88v54M154 269h80v50"),
  box(266,273,80,44)+t(306,288,9,"Module")+`<path d="M258 281h17v8h-17zM258 298h17v8h-17z" fill="#fff" stroke="#000" stroke-width="4"/>`,
  box(365,281,89,45)+p("M365 281V263h50v18")+t(409,303,14.5,"package","#000",'font-weight="700"'),
  box(473,270,89,50)+t(516,279,7,"Object:Type","#000")+p("M475 284H560",'stroke="#aaa"')+l(477,292,7,"field1 = value1")+l(477,300,7,"field2 = value2")+l(477,308,7,"field3 = value3")],
 [box(40,375,90,43)+`<path d="M42 377h86v7H42z" fill="#ccc"/>`+l(44,382,7,"Tablename")+l(44,391,6,"PK")+l(67,391,6,"uniqueId")+l(44,399,6,"FK1")+l(67,399,6,"foreignKey")+l(67,405,6,"fieldname"),
  box(149,378,89,37)+t(193,385,9,"Object","#333")+p("M150 391h88",'stroke="#ccc"'),box(257,378,89,37)+t(301,385,9,"Object","#333")+p("M258 391h88M258 402h88",'stroke="#ccc"'),
  box(365,374,89,47)+t(409,381,7,"Class","#222")+l(368,393,7,"+ field: Type")+l(368,408,7,"+ method(): Type")+p("M366 400h88",'stroke="#aaa"'),
  box(473,366,89,64)+t(516,373,7,"&lt;&lt;interface&gt;&gt;","#222")+t(516,379,6,"Name","#222")+l(476,389,7,"+ field1: Type")+l(476,396,7,"+ field2: Type")+p("M474 402h88",'stroke="#aaa"')+l(476,409,7,"+ method1(Type): Type")+l(476,416,7,"+ method2(Type, Type)")],
 [`<circle cx="73" cy="498" r="29" ${K}/>`+p("M86 459q39 0 39 40t-39 40"),p("M174 459q40 0 40 40t-40 40"),p("M257 498h28M309 498h22M296 485q14 0 14 14t-14 14")+`<circle cx="294" cy="498" r="9" ${K}/>`,
  `<circle cx="417" cy="498" r="37" ${K}/>`+p("M365 481v34M365 498h15")+t(416,494,10.5,"Boundary")+t(416,507,10.5,"Object"),
  `<circle cx="517" cy="499" r="41" ${K}/>`+p("M487 541h61")+t(516,502,13,"Entity Object")],
 [`<circle cx="86" cy="606" r="36" ${K}/>`+p("M76 571l20-10M76 571l18 9")+t(85,603,13,"Control")+t(85,617,13,"Object"),
  `<circle cx="193" cy="571" r="10" ${K}/>`+p("M193 581v33M173 588h40M193 614l-20 28M193 614l20 28"),
  `<ellipse cx="301" cy="601" rx="45" ry="22" ${K}/>`+t(300,604,10,"Use Case"),
  dn(409,580,636)+`<circle cx="409" cy="572" r="9" stroke="#f00" stroke-width="3"/>`,
  `<rect x="473" y="562" width="88" height="27" rx="9" ${R} style="fill:#ffffc0"/>`+t(516,577,9,"Activity")+dn(517,589,636)],
 [`<rect x="42" y="669" width="88" height="31" rx="9" ${R} style="fill:#ffffc0"/>`+p("M42 683h88",R)+t(85,679,7,"Composite State","#000")+t(85,695,8,"Subtitle")+dn(85,700,746),
  `<path d="M148 688l20-11 20 11-20 11z" ${R} style="fill:#ffffc0"/>`+ar(188,236,688,"#f00")+dn(168,699,737),
  p("M258 688h86",R)+dn(301,688,733),`<circle cx="408" cy="702" r="41" ${R}/><circle cx="408" cy="702" r="31"/>`,
  `<path d="M502 662h30v12h-30z" fill="#fff" stroke="#222" stroke-width="4"/>`+t(517,670,6,"Object")+p("M517 675v88",'stroke="#777" stroke-width="2.6"')],
 [life(85,87)+p("M85 73v13M81 76h8M81 83h8"),...[193,301,409].map(x=>life(x,87)+`<circle cx="${x}" cy="80" r="6" ${K}/>`),`<path d="M475 88h84v54h-84z" ${K}/>`+p("M475 96h16l3-7",'stroke="#000" stroke-width="2.5" fill="none"')],
 [p("M48 178l76 74M124 178l-76 74",'stroke="#000" stroke-width="6"'),
  box(218,187,9,72)+ar(165,219,189)+`<circle cx="166" cy="189" r="6"/>`+t(193,184,10,"dispatch"),box(329,187,8,66)+ar(272,329,189)+t(298,184,10,"dispatch")+al(271,325,250,'stroke-dasharray="4 2"')+t(300,246,9,"return"),
  box(368,209,11,46)+p("M373 186h33v23h-20")+`<path d="M379 209l11-6v12z"/>`+t(432,197,11,"self call"),box(478,190,10,60)+al(487,547,191)+t(516,187,11,"callback")+ar(490,547,247,"#222",2)+t(517,241,10,"return")],
 [box(80,278,11,82),ar(160,225,321)+`<circle cx="160" cy="321" r="6"/>`+t(193,315,11,"dispatch"),ar(270,338,321)+`<circle cx="272" cy="321" r="8"/>`+t(300,315,10,"dispatch"),ar(372,448,323)+t(406,318,10,"dispatch"),al(479,552,321,'stroke-dasharray="4 2"')+t(515,315,10,"return")],
 [ar(46,127,420,"#333",4)+l(44,425,7,"1"),p("M150 425h88",'stroke="#222" stroke-width="3.500"')+l(150,423,7,"parent")+l(225,423,7,"child"),ar(270,340,421)+al(262,330,421),ar(375,448,421)+al(371,440,421),ar(485,556,421)+al(479,500,421)+t(515,420,7,"Relation")],
 [ar(48,125,523,"#555",2)+t(85,522,7,"1 use"),ar(158,232,523)+t(193,521,7,"Extends"),ar(270,342,523)+al(260,330,523),ar(375,450,523)+`<circle cx="375" cy="523" r="6"/>`,ar(485,558,523)+al(479,540,523)],
 [ar(48,125,625,"#444",2.500),ar(159,230,625),ar(267,338,625),ar(373,449,625)]
];
document.getElementById("palette").innerHTML=cells.map((row,r)=>row.map((c,i)=>`<svg viewBox="${30+108*i} ${r<7?39+102*r:63+102*(r-7)} 108 102">${c}</svg>`).join("")+(row.length<5?"<svg></svg>":"")).join("");
</script>
</body>
</html>
